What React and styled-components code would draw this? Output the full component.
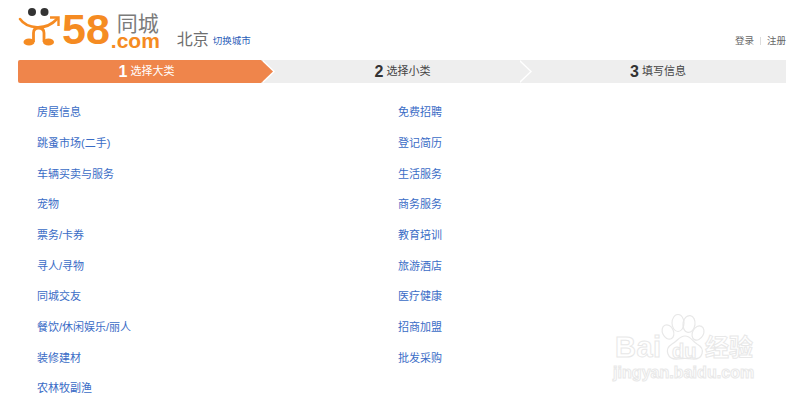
import React from 'react';
import styled, { createGlobalStyle } from 'styled-components';

const CJK = '"Liberation Sans", "Noto Sans CJK SC", sans-serif';

const Global = createGlobalStyle`
  html, body { margin: 0; padding: 0; background: #fff; overflow: hidden; }
  body { width: 800px; height: 400px; font-family: ${CJK}; }
`;

const Page = styled.div`
  position: relative;
  width: 800px;
  height: 400px;
  overflow: hidden;
`;

const Header = styled.header`
  display: flex;
  align-items: flex-end;
  justify-content: space-between;
  height: 60px;
  padding: 0 14px 0 18px;
  box-sizing: border-box;
`;

const Brand = styled.div`
  display: flex;
  align-items: flex-end;
  height: 60px;
`;

const LogoMark = styled.svg`
  display: block;
  width: 42px;
  height: 48px;
  flex: none;
  margin-bottom: 10px;
`;

const LogoNum = styled.span`
  display: block;
  font: bold 43px/39px "Liberation Sans", sans-serif;
  color: #f58b22;
  margin: 0 0 11px 2px;
`;

const LogoSide = styled.div`
  display: flex;
  flex-direction: column;
  align-items: flex-end;
  width: 50px;
  margin: 0 0 12.5px 0;
`;

const LogoName = styled.span`
  font: 21px/21px "Noto Sans CJK SC", sans-serif;
  color: #7b7b7b;
  margin-right: 1px;
`;

const LogoDomain = styled.span`
  font: bold 21px/15px "Liberation Sans", sans-serif;
  color: #f58b22;
`;

const City = styled.span`
  font: 16px/20px "Noto Sans CJK SC", sans-serif;
  color: #6e6e6e;
  margin: 0 0 12.5px 17px;
`;

const CityLink = styled.a`
  font-size: 9.5px;
  line-height: 12px;
  color: #2a5db8;
  margin: 0 0 13px 4px;
`;

const UserLinks = styled.nav`
  display: flex;
  align-items: center;
  margin-bottom: 13px;
  font-size: 9.5px;
  line-height: 12px;
  color: #666;
`;

const Divider = styled.i`
  width: 1px;
  height: 8px;
  background: #ddd;
  margin: 0 6px;
`;

const Stepper = styled.ol`
  display: flex;
  list-style: none;
  margin: 0 14px 0 18px;
  padding: 0;
  height: 23px;
  background: #eeeeee;
  border-radius: 2px 0 0 2px;
`;

const Step = styled.li`
  position: relative;
  z-index: ${p => p.$layer};
  box-sizing: border-box;
  width: ${p => p.$width}px;
  flex: none;
  display: flex;
  align-items: center;
  justify-content: center;
  padding-left: ${p => p.$pad}px;
  background: ${p => (p.$active ? '#ef854b' : '#eeeeee')};
  color: ${p => (p.$active ? '#fff' : '#444')};
  border-radius: ${p => (p.$active ? '2px 0 0 2px' : '0')};

  &::before, &::after {
    content: '';
    display: ${p => (p.$last ? 'none' : 'block')};
    position: absolute;
    top: 0;
    bottom: 0;
    width: 12px;
    clip-path: polygon(0 0, 100% 50%, 0 100%);
  }
  &::before { left: calc(100% + 2px); background: #fff; }
  &::after { left: 100%; background: ${p => (p.$active ? '#ef854b' : '#eeeeee')}; }
`;

const StepNum = styled.b`
  font: bold 16px/23px "Liberation Sans", sans-serif;
  margin-right: 3px;
  color: ${p => (p.$active ? '#fff' : '#333')};
`;

const StepLabel = styled.span`
  font-size: 11px;
  line-height: 23px;
`;

const Categories = styled.ul`
  display: grid;
  grid-template-columns: 361px 361px;
  grid-template-rows: repeat(10, 30.67px);
  grid-auto-flow: column;
  list-style: none;
  margin: 13px 0 0;
  padding: 0 0 0 37px;
`;

const Category = styled.li`
  display: flex;
  align-items: center;
  font-size: 11px;
  color: #3a6cc6;
`;

const Watermark = styled.div`
  position: absolute;
  left: 612px;
  top: 314px;
  width: 150px;
  height: 72px;
`;

const Paw = styled.svg`
  position: absolute;
  left: 0;
  top: 0;
  width: 150px;
  height: 52px;
`;

const MarkText = styled.span`
  position: absolute;
  font-family: ${p => (p.$cjk ? '"Noto Sans CJK SC"' : '"Liberation Sans"')}, sans-serif;
  font-weight: bold;
  font-size: ${p => p.$size}px;
  line-height: 1;
  left: ${p => p.$x}px;
  top: ${p => p.$y}px;
  color: #fff;
  -webkit-text-stroke: 1px #e8e8e8;
  white-space: nowrap;
  letter-spacing: ${p => p.$track || 0}px;
`;

const LEFT = ['房屋信息','跳蚤市场(二手)','车辆买卖与服务','宠物','票务/卡券','寻人/寻物','同城交友','餐饮/休闲娱乐/丽人','装修建材','农林牧副渔'];
const RIGHT = ['免费招聘','登记简历','生活服务','商务服务','教育培训','旅游酒店','医疗健康','招商加盟','批发采购'];

export default function App() {
  return (
    <Page>
      <Global />
      <Header>
        <Brand>
          <LogoMark viewBox="18 2 42 48">
            <circle cx="32" cy="12" r="4" fill="#333" />
            <circle cx="44.5" cy="12" r="4" fill="#333" />
            <path d="M20 19 C27 29 46 31 57 19" fill="none" stroke="#f58b22" strokeWidth="2.6" strokeLinecap="round" />
            <path d="M50 17.5 H58.5 V26" fill="none" stroke="#f58b22" strokeWidth="2.4" />
            <path d="M33.5 42 V33 Q33.5 28 38.5 28 Q44 28 44 33 V42" fill="none" stroke="#f58b22" strokeWidth="2.8" />
            <ellipse cx="29" cy="42" rx="5.5" ry="3.6" fill="#f58b22" />
            <ellipse cx="48.5" cy="42" rx="5.5" ry="3.6" fill="#f58b22" />
          </LogoMark>
          <LogoNum>58</LogoNum>
          <LogoSide>
            <LogoName>同城</LogoName>
            <LogoDomain>.com</LogoDomain>
          </LogoSide>
          <City>北京</City>
          <CityLink>切换城市</CityLink>
        </Brand>
        <UserLinks>
          <span>登录</span>
          <Divider />
          <span>注册</span>
        </UserLinks>
      </Header>
      <Stepper>
        <Step $active $width={243} $pad={14} $layer={3}>
          <StepNum $active>1</StepNum><StepLabel>选择大类</StepLabel>
        </Step>
        <Step $width={257} $pad={26} $layer={2}>
          <StepNum>2</StepNum><StepLabel>选择小类</StepLabel>
        </Step>
        <Step $width={268} $pad={12} $layer={1} $last>
          <StepNum>3</StepNum><StepLabel>填写信息</StepLabel>
        </Step>
      </Stepper>
      <Categories>
        {LEFT.map(t => <Category key={t}>{t}</Category>)}
        {RIGHT.map(t => <Category key={t}>{t}</Category>)}
      </Categories>
      <Watermark>
        <Paw viewBox="0 0 150 52">
          <g fill="none" stroke="#e8e8e8" strokeWidth="1.2">
            <ellipse cx="56" cy="18" rx="5.5" ry="7.5" transform="rotate(-25 56 18)" />
            <ellipse cx="66" cy="9" rx="6" ry="8.5" />
            <ellipse cx="77" cy="10" rx="6" ry="8.5" transform="rotate(8 77 10)" />
            <ellipse cx="86" cy="19" rx="5.5" ry="7.5" transform="rotate(28 86 19)" />
            <path d="M66 45 C55 46 52 35 60 30 C66 27 67 22 73 22 C79 22 80 27 85 30 C94 35 91 46 80 45 C75 44 71 44 66 45 Z" />
          </g>
        </Paw>
        <MarkText $size={29} $x={3} $y={19} $track={0.5}>Bai</MarkText>
        <MarkText $size={20} $x={60} $y={27}>du</MarkText>
        <MarkText $cjk $size={24} $x={93} $y={20}>经验</MarkText>
        <MarkText $size={16} $x={1} $y={51} $track={0.05}>jingyan.baidu.com</MarkText>
      </Watermark>
    </Page>
  );
}
